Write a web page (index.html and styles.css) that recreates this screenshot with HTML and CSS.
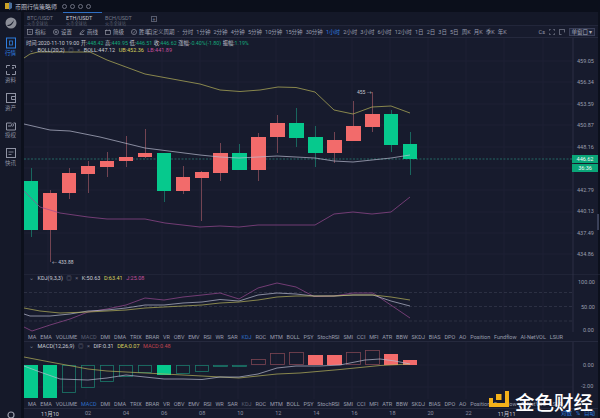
FILE: index.html
```html
<!DOCTYPE html>
<html lang="zh">
<head>
<meta charset="utf-8">
<title>币圈行情策略师</title>
<link rel="stylesheet" href="styles.css">
</head>
<body>
<header class="titlebar">
  <svg class="applogo" viewBox="0 0 9 8"><path d="M1 1h4v6H1z" fill="#c9a227"/><path d="M5 0l3 1v5L5 8z" fill="#4a6f9c"/></svg>
  <span class="apptitle">币圈行情策略师</span>
  <span class="winbtns"><i></i><i></i><i></i><i></i></span>
</header>
<div class="main">
  <nav class="sidebar">
    <svg class="brand" viewBox="0 0 12 12"><circle cx="6" cy="6" r="5.5" fill="#8b8e98"/><path d="M2 8c3 0 5-2 7-5-1 4-3 6-6 6z" fill="#1a1e2e"/></svg>
    <a class="navitem active"><svg viewBox="0 0 14 14"><rect x="2.5" y="2" width="9" height="10" fill="none" stroke="currentColor"/><rect x="5.5" y="5" width="3" height="4" fill="none" stroke="currentColor" stroke-width=".8"/></svg><span>行情</span></a>
    <a class="navitem"><svg viewBox="0 0 14 14"><path d="M2.5 5V2.5H6M8 2.5h3.500V5M11.500 8v3.500H8M6 11.500H2.500V8" fill="none" stroke="currentColor"/><circle cx="9" cy="5" r="1" fill="currentColor"/></svg><span>资料</span></a>
    <a class="navitem"><svg viewBox="0 0 14 14"><rect x="2.500" y="2.500" width="9" height="9" fill="none" stroke="currentColor"/><path d="M11 5.500H7.500v3H11M8 2.500" fill="none" stroke="currentColor"/></svg><span>资产</span></a>
    <a class="navitem"><svg viewBox="0 0 14 14"><path d="M2.500 5h5M9.500 5h2v7h-9V5" fill="none" stroke="currentColor"/><circle cx="8.500" cy="7" r="1.200" fill="none" stroke="currentColor" stroke-width=".8"/><path d="M4 8h3" stroke="currentColor"/></svg><span>授权</span></a>
    <a class="navitem"><svg viewBox="0 0 14 14"><rect x="2.500" y="2.500" width="9" height="9" fill="none" stroke="currentColor"/><path d="M4.500 6h5M4.500 8.500h3" stroke="currentColor" stroke-width=".8"/></svg><span>快讯</span></a>
    <svg class="gear" viewBox="0 0 10 10"><circle cx="5" cy="5" r="3" fill="none" stroke="#9a9dab" stroke-width="1.200"/></svg>
  </nav>
  <div class="content">
    <div class="tabs">
      <div class="tab"><b>BTC/USDT</b><small>火币全球站</small></div>
      <div class="tab current"><b>ETH/USDT</b><small>火币全球站</small></div>
      <div class="tab"><b>BCH/USDT</b><small>火币全球站</small></div>
      <span class="addtab">+</span>
    </div>
    <div class="toolbar">
      <div class="tools">
        <span class="tool"><svg viewBox="0 0 7 7"><rect x=".5" y=".5" width="6" height="6"/><path d="M2 3.500h3"/></svg>指标</span>
        <span class="tool"><svg viewBox="0 0 7 7"><circle cx="3.500" cy="3.500" r="3"/><circle cx="3.500" cy="3.500" r="1"/></svg>设置</span>
        <span class="tool"><svg viewBox="0 0 7 7"><path d="M1 6l1-2 3-3 1 1-3 3zM1 6.500h5"/></svg>画线</span>
        <span class="tool"><svg viewBox="0 0 7 7"><rect x=".5" y="1.500" width="6" height="5"/><path d="M2 .5v2M5 .5v2"/></svg>简级</span>
        <span class="tool"><svg viewBox="0 0 7 7"><circle cx="3.500" cy="3.500" r="3"/><path d="M2 3.500l1 1 2-2"/></svg>胜率</span>
      </div>
      <div class="periods">
        <span>自定义周期</span><span>-</span><span>分时</span><span>1分钟</span><span>2分钟</span><span>4分钟</span><span>5分钟</span><span>10分钟</span><span>15分钟</span><span>30分钟</span><span class="on">1小时</span><span>2小时</span><span>3小时</span><span>6小时</span><span>12小时</span><span>1日</span><span>2日</span><span>3日</span><span>5日</span><span>周K</span><span>月K</span><span>季K</span><span>年K</span>
      </div>
      <div class="winctl">
        <span>Cs</span>
        <svg viewBox="0 0 7 7"><path d="M.5 2V.5H2M5 .5h1.500V2M6.500 5v1.500H5M2 6.500H.5V5"/></svg>
        <svg viewBox="0 0 7 7"><path d="M3 6.500H.5V.5h6V4"/></svg>
        <span class="winselect">单窗口 ▾</span>
      </div>
    </div>

    <section class="pane pane-main">
      <div class="quote">
        <span>时间:2020-11-10 19:00</span>
        <span>开:<em class="g">448.42</em></span>
        <span>高:<em class="g">449.95</em></span>
        <span>低:<em class="g">446.51</em></span>
        <span>收:<em class="g">446.62</em></span>
        <span>涨幅:<em class="g">-0.40%(-1.80)</em></span>
        <span>振幅:<em class="g">1.19%</em></span>
      </div>
      <div class="legend legend-main">
        <span class="chev">⌄</span><span class="w">BOLL(20,2)</span><span class="dim">◎</span><span class="dim">×</span>
        <span class="w">BOLL:447.12</span><span class="y">UB:452.36</span><span class="p">LB:441.89</span>
      </div>
      <svg class="plot" width="576" height="236" viewBox="24 38 576 236">
        <g class="grid">
          <path d="M48 38V274M86 38V274M124 38V274M162 38V274M200 38V274M238 38V274M276 38V274M314 38V274M352 38V274M390 38V274M428 38V274M466 38V274M504 38V274M543 38V274"/>
          <path d="M24 61H573M24 82H573M24 104H573M24 125H573M24 147H573M24 168H573M24 190H573M24 212H573M24 233H573M24 254H573"/>
        </g>
        <path class="price" d="M24 159H573"/>
        <g class="wd">
          <path d="M50.500 190V262M69.500 168V199M88.500 161V193M107.500 152V177M126.500 136V167M145.500 129V158M183.500 166V194M201.500 171V221M220.500 143V181M258.500 133V181M277.500 115V153M334.500 132V163M353.500 101V141M372.500 92V132"/>
        </g>
        <g class="wu">
          <path d="M31.500 168V237M164.500 153V202M239.500 144V170M296.500 108V147M315.500 126V167M391.500 110V152M410.500 132V175"/>
        </g>
        <g class="dn">
          <rect x="43" y="193" width="14" height="37"/><rect x="62" y="173" width="14" height="20"/><rect x="81" y="166" width="14" height="8"/><rect x="100" y="161" width="14" height="6"/><rect x="119" y="157" width="14" height="4"/><rect x="138" y="153" width="14" height="4"/><rect x="176" y="177" width="14" height="14"/><rect x="195" y="172" width="14" height="6"/><rect x="213" y="153" width="15" height="20"/><rect x="251" y="137" width="15" height="33"/><rect x="270" y="123" width="15" height="14"/><rect x="327" y="140" width="15" height="13"/><rect x="346" y="126" width="15" height="15"/><rect x="365" y="114" width="15" height="13"/>
        </g>
        <g class="up">
          <rect x="24" y="181" width="14" height="49"/><rect x="157" y="153" width="14" height="38"/><rect x="232" y="153" width="15" height="17"/><rect x="289" y="123" width="15" height="15"/><rect x="308" y="137" width="15" height="16"/><rect x="384" y="114" width="14" height="31"/><rect x="403" y="144" width="14" height="15"/>
        </g>
        <polyline class="ly" points="24,58 30,54 38,52 90,52 107,60 145,74 200,84 220,90 240,91.500 260,90 278,87 296,87.500 315,92 334,110 353,114 372,107 391,106 410,113"/>
        <polyline class="lw" points="24,124 50,130 70,131 100,137 145,148 200,155 220,157 239,158 258,157 277,156 296,157 315,158 334,161 353,162 372,160 391,158 410,155"/>
        <polyline class="lp" points="24,191 40,207 60,213 88,217 107,219 145,219 165,223 200,227 220,226 239,227 258,225 277,225 315,225 334,214 353,212 372,214 391,212 410,197"/>
        <g class="note">
          <text x="52" y="264">← 433.88</text>
          <text x="357" y="94">455 →</text>
        </g>
        <path class="axis" d="M573 38V274"/>
        <g class="ticks">
          <text x="577" y="63">459.05</text><text x="577" y="84">456.34</text><text x="577" y="106">453.59</text><text x="577" y="127">450.87</text><text x="577" y="149">448.16</text><text x="577" y="192">442.79</text><text x="577" y="213">440.13</text><text x="577" y="235">437.49</text><text x="577" y="256">434.86</text>
        </g>
        <rect class="tag" x="572" y="155" width="26" height="8"/>
        <rect class="tag" x="572" y="164" width="26" height="8"/>
        <text class="tagtext" x="585" y="161">446.62</text>
        <text class="tagtext" x="585" y="170">36:36</text>
        <rect class="handle" x="597" y="214" width="2" height="16"/>
      </svg>
    </section>

    <section class="pane pane-kdj">
      <div class="legend legend-sub">
        <span class="chev">⌄</span><span class="w">KDJ(9,3,3)</span><span class="dim">◎</span><span class="dim">×</span>
        <span class="w">K:50.63</span><span class="y">D:63.41</span><span class="p">J:25.08</span>
      </div>
      <svg class="plot" width="576" height="58" viewBox="24 274 576 58">
        <path class="sep" d="M24 274.300H600"/>
        <g class="grid">
          <path d="M48 274V332M86 274V332M124 274V332M162 274V332M200 274V332M238 274V332M276 274V332M314 274V332M352 274V332M390 274V332M428 274V332M466 274V332M504 274V332M543 274V332"/>
        </g>
        <path class="dash" d="M24 292.500H573M24 306.500H573M24 321H573"/>
        <polyline class="lp" points="24,327 32,331 50,325 70,319 88,312 107,309 126,305 145,298 164,300 183,297 202,295 220,293 239,299 258,288 277,283 296,287 314,296.500 334,296 353,293 373,293 410,318"/>
        <polyline class="lw" points="24,314 30,316 50,316 70,314 88,311 107,310 126,308 145,305 164,305 183,303 202,302 220,299.500 239,301 258,295 277,293 296,294 314,296 334,296 353,295 373,295 391,301 410,306"/>
        <polyline class="ly" points="24,308 40,311 60,313 88,312 107,311 126,310 145,308 164,307 183,306 202,305 220,303 239,302 258,300 277,297 296,296 314,296 334,296 353,295 373,295 391,297 410,300"/>
        <path class="axis" d="M573 274V332"/>
        <g class="ticks">
          <text x="578" y="284">100.00</text><text x="581" y="309">50.00</text><text x="583" y="332">0.00</text>
        </g>
      </svg>
      <div class="indicators">
        <span>MA</span><span>EMA</span><span>VOLUME</span><span class="faint">MACD</span><span>DMI</span><span>DMA</span><span>TRIX</span><span>BRAR</span><span>VR</span><span>OBV</span><span>EMV</span><span>RSI</span><span>WR</span><span>SAR</span><span class="on">KDJ</span><span>ROC</span><span>MTM</span><span>BOLL</span><span>PSY</span><span>StochRSI</span><span>SMI</span><span>CCI</span><span>MFI</span><span>ATR</span><span>BBW</span><span>SKDJ</span><span>BIAS</span><span>DPO</span><span>AO</span><span>Position</span><span>Fundflow</span><span>AI-NetVOL</span><span>LSUR</span>
      </div>
    </section>

    <section class="pane pane-macd">
      <div class="legend legend-sub">
        <span class="chev">⌄</span><span class="w">MACD(12,26,9)</span><span class="dim">◎</span><span class="dim">×</span>
        <span class="w">DIF:0.31</span><span class="y">DEA:0.07</span><span class="r">MACD:0.48</span>
      </div>
      <svg class="plot" width="576" height="57" viewBox="24 342 576 57">
        <g class="grid">
          <path d="M48 342V399M86 342V399M124 342V399M162 342V399M200 342V399M238 342V399M276 342V399M314 342V399M352 342V399M390 342V399M428 342V399M466 342V399M504 342V399M543 342V399"/>
          <path d="M24 365H573M24 387H573"/>
        </g>
        <g class="up">
          <rect x="24" y="365" width="14" height="33"/><rect x="43" y="365" width="14" height="33"/><rect x="157" y="365" width="14" height="10"/>
        </g>
        <g class="hu">
          <rect x="62.500" y="365.500" width="13" height="27"/><rect x="81.500" y="365.500" width="13" height="22"/><rect x="100.500" y="365.500" width="13" height="16"/><rect x="119.500" y="365.500" width="13" height="11"/><rect x="138.500" y="365.500" width="13" height="7"/><rect x="176.500" y="365.500" width="13" height="8"/><rect x="195.500" y="365.500" width="13" height="6"/><rect x="213.500" y="365.500" width="14" height="1"/><rect x="232.500" y="365.500" width="14" height="1"/>
        </g>
        <g class="hd">
          <rect x="251.500" y="359.500" width="14" height="5"/><rect x="270.500" y="353.500" width="14" height="11"/><rect x="289.500" y="352.500" width="14" height="12"/><rect x="346.500" y="352.500" width="14" height="12"/><rect x="365.500" y="350.500" width="14" height="14"/>
        </g>
        <g class="dn">
          <rect x="308" y="355" width="15" height="10"/><rect x="327" y="355" width="15" height="10"/><rect x="384" y="354" width="14" height="11"/><rect x="403" y="360" width="14" height="5"/>
        </g>
        <polyline class="ly" points="24,357 50,362 88,369 107,371 126,372 164,374 202,376 239,378 277,374 300,373 340,369.500 380,365.500 410,364"/>
        <polyline class="lw" points="24,366 40,372 60,379 88,380 107,378 126,375 145,377 164,379 183,379 202,379.500 220,377 239,377 258,374 277,368 296,366 320,366 340,365 365,360 380,359 395,361 410,364"/>
        <path class="axis" d="M573 342V399"/>
        <g class="ticks">
          <text x="583" y="367">0.00</text><text x="581" y="388">-2.00</text>
        </g>
      </svg>
      <div class="indicators">
        <span>MA</span><span>EMA</span><span>VOLUME</span><span class="on">MACD</span><span>DMI</span><span>DMA</span><span>TRIX</span><span>BRAR</span><span>VR</span><span>OBV</span><span>EMV</span><span>RSI</span><span>WR</span><span>SAR</span><span class="faint">KDJ</span><span>ROC</span><span>MTM</span><span>BOLL</span><span>PSY</span><span>StochRSI</span><span>SMI</span><span>CCI</span><span>MFI</span><span>ATR</span><span>BBW</span><span>SKDJ</span><span>BIAS</span><span>DPO</span><span>AO</span><span>Position</span><span>Fundflow</span><span>AI-NetVOL</span><span>LSUR</span>
      </div>
    </section>

    <footer class="timeaxis">
      <div class="times">
        <span class="strong">11月10</span><span>02</span><span>04</span><span>06</span><span>08</span><span>10</span><span>12</span><span>14</span><span>16</span><span>18</span><span>20</span><span>22</span><span class="strong">11月11</span>
      </div>
      <div class="scale"><span>对数</span><span>%</span><span>自动</span></div>
    </footer>
  </div>
</div>
<div class="watermark">
  <svg viewBox="0 0 20 17"><path d="M16 0h4v16H0V7h4v5h12z" fill="#f5b21a"/><rect x="7" y="3" width="5.500" height="6" fill="#f5b21a"/></svg>
  <span>金色财经</span>
</div>
</body>
</html>
```
FILE: styles.css
```css
* { box-sizing: border-box; }
html, body { margin: 0; padding: 0; }
body {
  position: relative;
  width: 600px;
  height: 418px;
  overflow: hidden;
  background: #0c101c;
  color: #9a9eae;
  font-family: Roboto, "Noto Sans CJK SC", sans-serif;
  font-size: 5.5px;
  display: flex;
  flex-direction: column;
}
em { font-style: normal; }

.titlebar { height: 12px; flex: none; display: flex; align-items: center; padding-left: 4px; background: #0b0f1b; }
.applogo { width: 9px; height: 8px; }
.apptitle { margin-left: 2px; font-size: 6px; color: #b8bbc6; width: 47px; white-space: nowrap; }
.winbtns { display: flex; gap: 3px; }
.winbtns i { width: 5px; height: 5px; border: 0.7px solid #6d7080; border-radius: 50%; }

.main { flex: 1; display: flex; min-height: 0; }
.sidebar { width: 21px; flex: none; background: #151929; display: flex; flex-direction: column; align-items: center; padding-top: 5px; gap: 6.5px; }
.brand { width: 12px; height: 12px; }
.navitem { display: flex; flex-direction: column; align-items: center; color: #8f93a3; line-height: 7px; font-size: 5.5px; }
.navitem svg { width: 14px; height: 14px; display: block; }
.navitem.active { color: #2f7fe0; }
.gear { width: 10px; height: 10px; margin-top: auto; margin-bottom: -2px; }

.content { flex: 1; min-width: 0; margin-left: 3px; margin-right: 2px; background: #171b2d; display: flex; flex-direction: column; }

.tabs { height: 14px; flex: none; display: flex; align-items: stretch; border-bottom: 0.5px solid #22263a; background: #141828; }
.tab { width: 39px; display: flex; flex-direction: column; align-items: flex-start; padding: 2px 0 0 3px; color: #767a8b; border-top: 1px solid transparent; }
.tab b { font-weight: 400; font-size: 5.5px; line-height: 6px; }
.tab small { font-size: 4.2px; line-height: 5px; color: #5c6072; }
.tab.current { color: #c8cad2; border-top-color: #2f6fc4; }
.addtab { margin: 4px 0 0 10px; width: 6px; height: 6px; border: 0.7px solid #565a6c; color: #7a7e90; font-size: 5px; line-height: 4.500px; text-align: center; }

.toolbar { height: 12px; flex: none; display: flex; align-items: center; padding-left: 3px; border-bottom: 0.5px solid #25293d; white-space: nowrap; }
.tools { display: flex; gap: 7px; width: 120px; color: #a3a6b4; }
.tool { display: flex; align-items: center; gap: 2px; }
.tool svg { width: 6px; height: 6px; fill: none; stroke: #a3a6b4; stroke-width: 0.7; }
.periods { display: flex; gap: 3.100px; color: #9a9eae; }
.periods .on { color: #2f7fe0; }
.winctl { margin-left: auto; display: flex; align-items: center; gap: 4px; padding-right: 3px; }
.winctl svg { width: 6px; height: 6px; fill: none; stroke: #9a9eae; stroke-width: 0.7; }
.winselect { width: 26px; height: 8px; line-height: 7px; border: 0.5px solid #3a3f58; background: #20253b; color: #a9adbb; text-align: center; }

.pane { position: relative; flex: none; }
.pane-main { height: 236px; }
.pane-kdj { height: 68px; }
.pane-macd { height: 67px; }
.plot { display: block; }

.quote { position: absolute; left: 2px; top: 2px; display: flex; gap: 1.500px; color: #c6c8d2; white-space: nowrap; line-height: 7px; font-size: 5.300px; }
.g { color: #14a97c; }
.legend { position: absolute; left: 5px; display: flex; align-items: center; gap: 3.500px; white-space: nowrap; line-height: 7px; z-index: 1; }
.legend-main { top: 9px; }
.legend-sub { top: 1px; }
.legend .chev { color: #7b7f90; }
.w { color: #c9cbd4; }
.y { color: #d9d25c; }
.p { color: #c2509c; }
.r { color: #c0444e; }
.dim { color: #6d7182; }

.sep { stroke: #2a2f44; stroke-width: 0.6; fill: none; }
.grid path { stroke: #1f2438; stroke-width: 0.7; fill: none; }
.axis { stroke: #33384e; stroke-width: 0.7; fill: none; }
.price { stroke: #2e9c8a; stroke-width: 0.6; stroke-dasharray: 2 1.500; fill: none; }
.dash { stroke: #3a3f52; stroke-width: 0.6; stroke-dasharray: 3 2; fill: none; }
.wd path { stroke: #8c4f5c; stroke-width: 0.8; fill: none; }
.wu path { stroke: #1a7a6b; stroke-width: 0.8; fill: none; }
.dn rect { fill: #f26b6b; }
.up rect { fill: #06c98d; }
.hu rect { fill: none; stroke: #1b7a6b; stroke-width: 0.8; }
.hd rect { fill: none; stroke: #7d4553; stroke-width: 0.8; }
polyline { fill: none; stroke-width: 0.7; }
.ly { stroke: #b9b45a; }
.lw { stroke: #b9bcd0; }
.lp { stroke: #9a4b92; }
.note text { fill: #c4c6d0; font-size: 5px; }
.ticks text { fill: #9a9eae; font-size: 5.500px; }
.tag { fill: #0aa578; }
.tagtext { fill: #f2f5f4; font-size: 5.500px; text-anchor: middle; }
.handle { fill: #3a4058; }

.indicators { height: 10px; display: flex; align-items: center; gap: 3.800px; padding-left: 4px; white-space: nowrap; color: #9a9eae; border-bottom: 0.5px solid #25293d; }
.indicators .on { color: #2d6fc6; }
.indicators .faint { color: #5b5f72; }

.timeaxis { flex: 1; display: flex; align-items: center; position: relative; min-height: 0; }
.times { display: grid; grid-template-columns: repeat(13, 38.050px); padding-left: 7px; text-align: center; color: #8d91a1; }
.strong { color: #c9cbd4; }
.scale { position: absolute; right: 3px; top: 0; display: flex; gap: 4px; line-height: 9px; color: #2f7fe0; }

.watermark { position: absolute; left: 489px; top: 391px; display: flex; align-items: flex-start; gap: 6px; }
.watermark svg { width: 20px; height: 17px; }
.watermark span { font-family: "Noto Sans CJK SC", sans-serif; font-size: 19.500px; line-height: 21px; color: #ffffff; font-weight: 500; white-space: nowrap; }
```
